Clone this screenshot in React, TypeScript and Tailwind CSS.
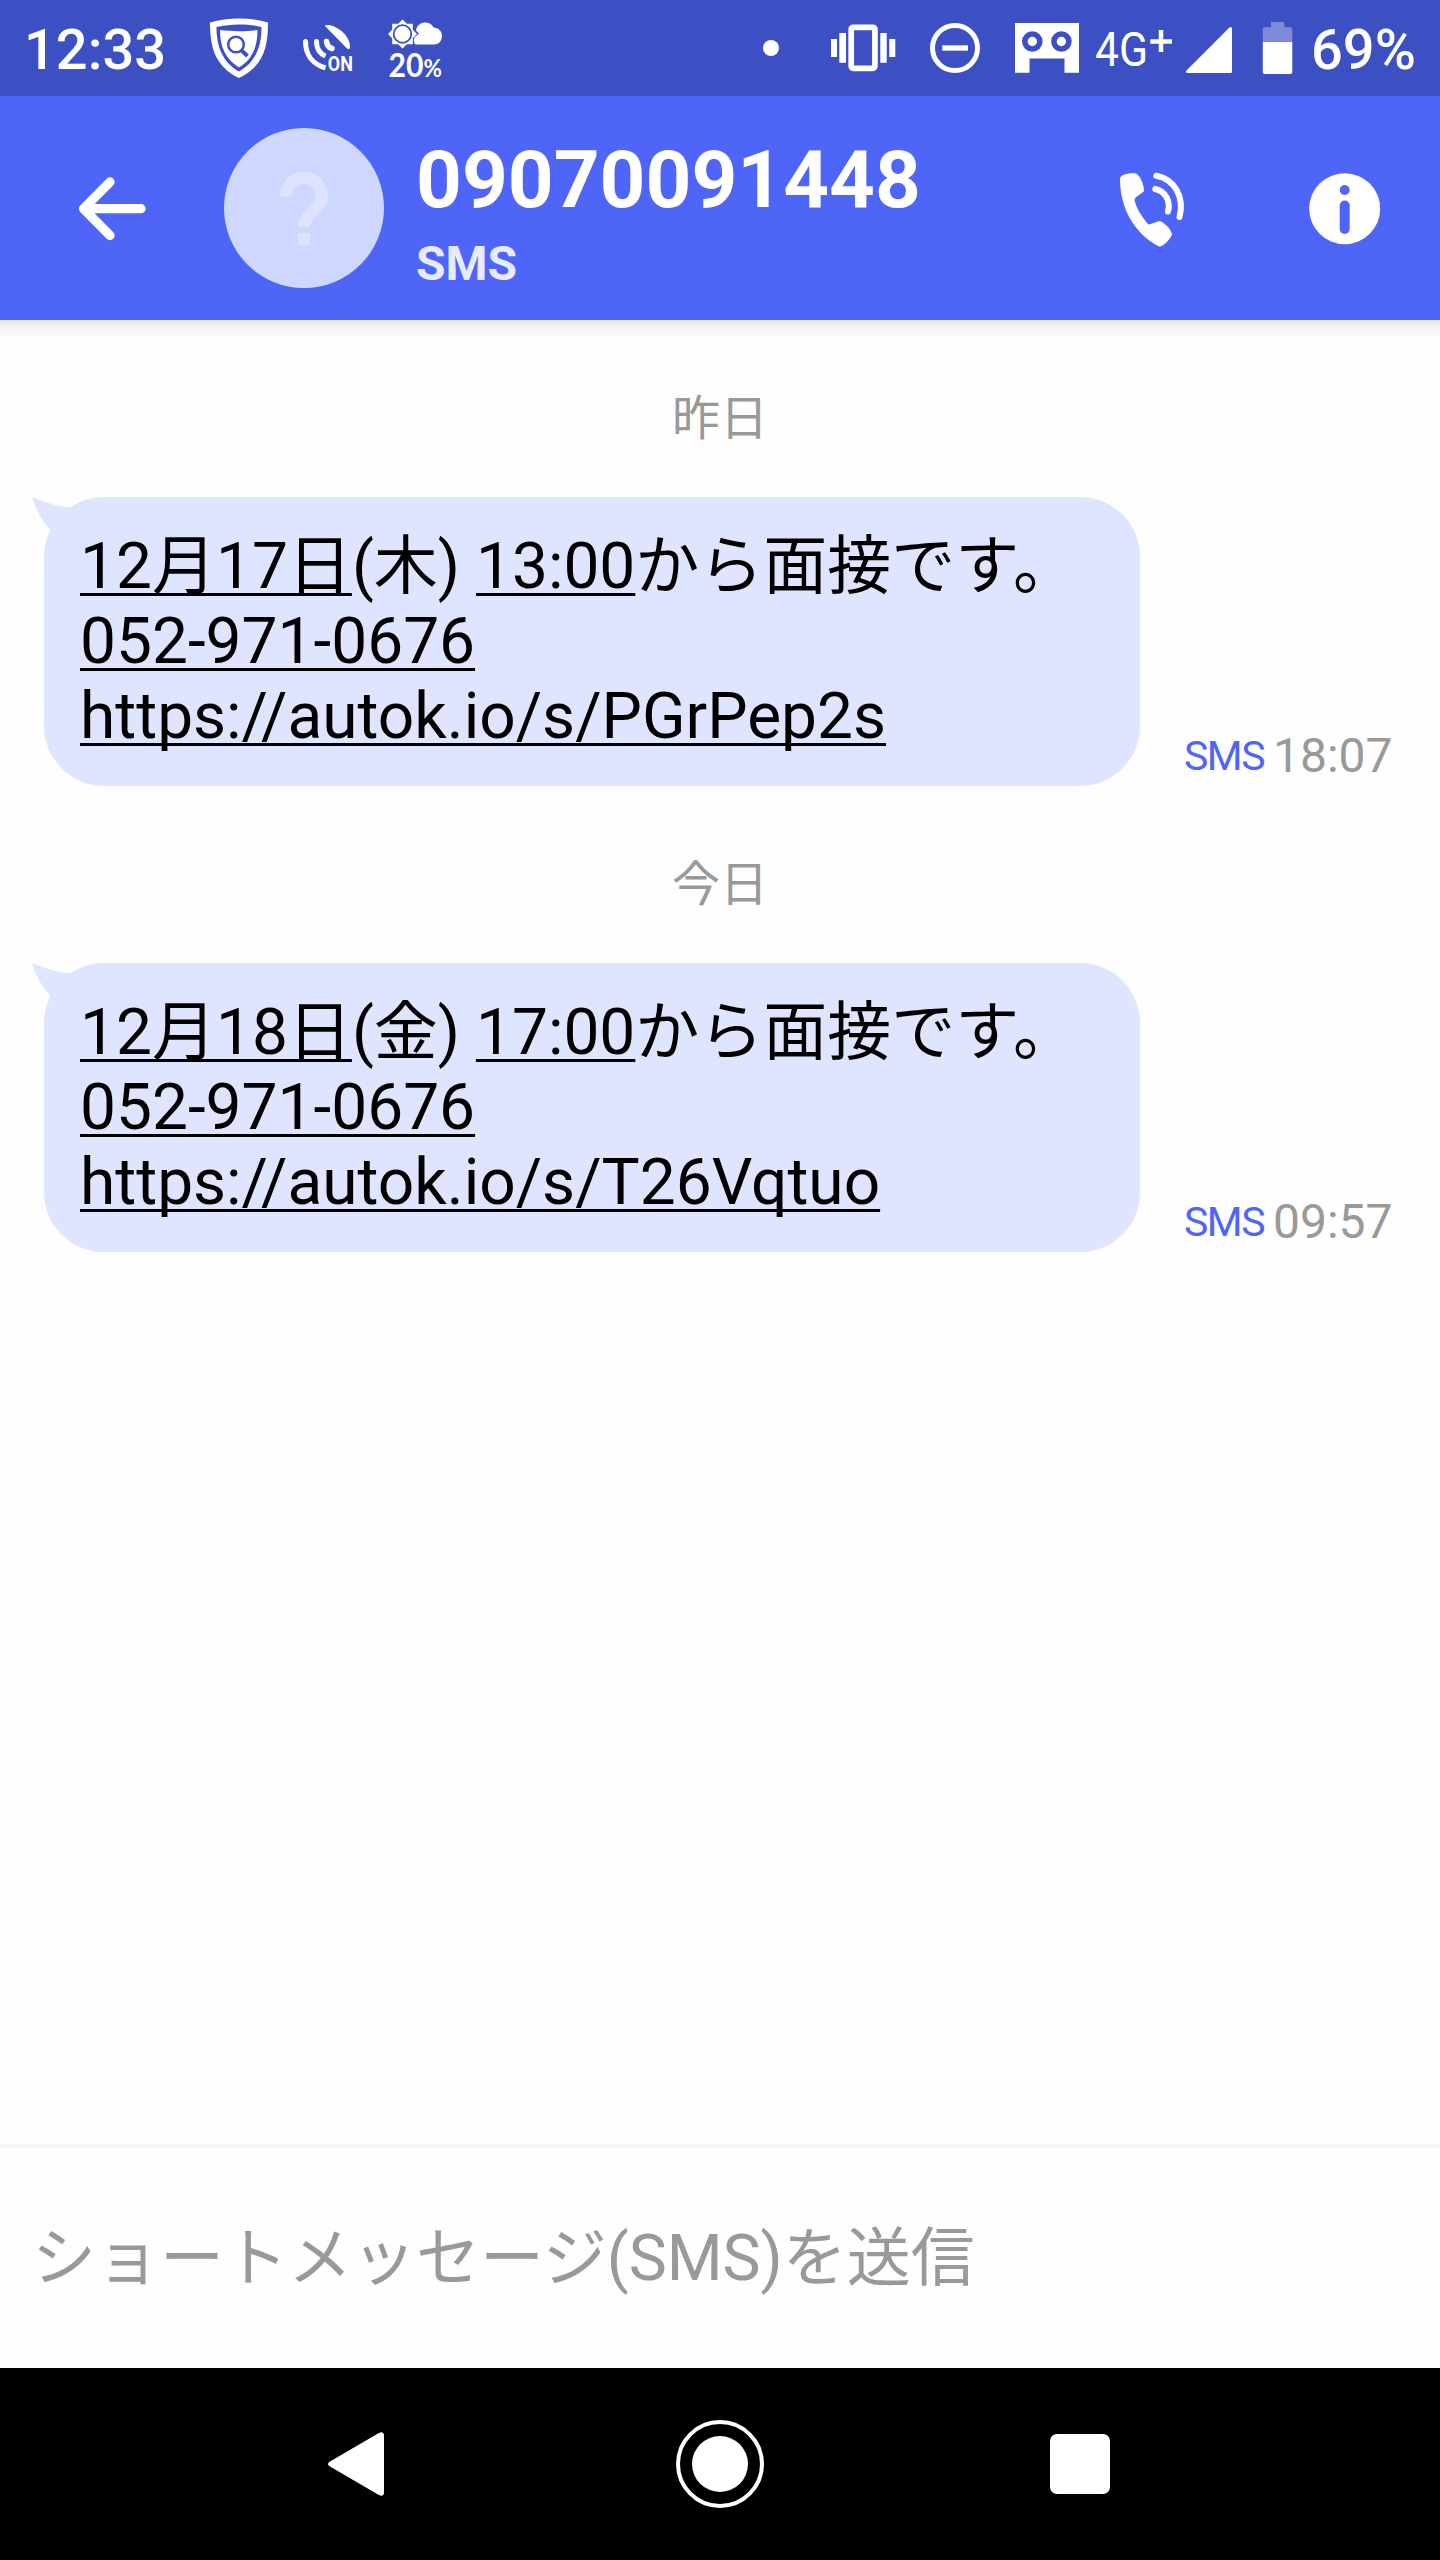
import type { ReactNode } from "react";

interface Message {
  day: string;
  date: string;
  weekday: string;
  hour: string;
  phone: string;
  url: string;
  sentAt: string;
}

const messages: Message[] = [
  {
    day: "昨日",
    date: "12月17日",
    weekday: "(木)",
    hour: "13:00",
    phone: "052-971-0676",
    url: "https://autok.io/s/PGrPep2s",
    sentAt: "18:07",
  },
  {
    day: "今日",
    date: "12月18日",
    weekday: "(金)",
    hour: "17:00",
    phone: "052-971-0676",
    url: "https://autok.io/s/T26Vqtuo",
    sentAt: "09:57",
  },
];

const StatusBar = () => (
  <div className="flex h-24 items-center bg-[#3c50c3] text-white">
    <span className="w-[210px] shrink-0 pl-6 pt-[5px] text-[56px] font-medium leading-[91px]">12:33</span>

    {/* Security shield */}
    <svg className="h-24 w-[58px] shrink-0" viewBox="210 0 58 96">
      <path d="M210 22.500C228 17 250 17 268 22.500C268 46 264 66 239 78C214 66 210 46 210 22.500Z" fill="#fff" />
      <path d="M216.500 27C231 23.500 247 23.500 261.500 27C261.500 46 256 62 239 71.500C222 62 216.500 46 216.500 27Z" fill="#3c50c3" />
      <path d="M220 30C232 31.500 246 31.500 257.500 30C257.500 46 253 59 239 67.500C225 59 220 46 220 30Z" fill="#fff" />
      <circle cx="236" cy="44.500" r="7.800" fill="#fff" stroke="#3c50c3" strokeWidth="2.500" />
      <path d="M241.500 50.500L247.500 56" stroke="#3c50c3" strokeWidth="4" />
    </svg>

    {/* GPS dish */}
    <svg className="ml-[34px] h-24 w-[64px] shrink-0 overflow-visible" viewBox="302 0 64 96">
      <path d="M325 26C325 25 327 24.700 329 25C340 27 350 37 350 47C350 49.500 348 49.500 346.500 48Z" fill="#fff" />
      <g fill="none" stroke="#fff" strokeWidth="5" strokeLinecap="round">
        <path d="M305.500 41.500C305.500 55 313 64.500 325.500 67.800" strokeLinecap="butt" />
        <path d="M305.500 41.500V42" />
        <path d="M316.500 41.500C316.500 49 319.500 53.500 325.500 56" strokeLinecap="butt" />
        <path d="M316.500 41.500V42" />
        <path d="M326.500 41.500C327 45 328.500 47.500 332 48.500" strokeWidth="5.500" />
      </g>
      <text x="327.800" y="71" fill="#fff" fontSize="20" fontWeight="700" textLength="25" lengthAdjust="spacingAndGlyphs">ON</text>
    </svg>

    {/* Weather */}
    <svg className="ml-[21px] h-24 w-[56px] shrink-0 overflow-visible" viewBox="387 0 56 96">
      <path d="M402.500 19.500L406.800 23.700H412.800V29.700L417 34L412.800 38.300V44.300H406.800L402.500 48.500L398.200 44.300H392.200V38.300L388 34L392.200 29.700V23.700H398.200Z" fill="#fff" />
      <circle cx="402.500" cy="34" r="8.800" fill="#fff" stroke="#3c50c3" strokeWidth="1.800" />
      <path d="M415.500 44.500C413.500 43 413.500 39 415 37L419 33.500L416 30.500C417.500 21 430 20 433.500 27.500C438 27.500 442 31 442 36C442 41 438.500 44.500 434 44.500Z" fill="#fff" />
      <g className="[font-family:Lato,sans-serif]" fill="#fff" fontWeight="700">
        <text x="388.500" y="77" fontSize="32" textLength="35" lengthAdjust="spacingAndGlyphs">20</text>
        <text x="423.500" y="77" fontSize="24" textLength="18.500" lengthAdjust="spacingAndGlyphs">%</text>
      </g>
    </svg>

    <span className="ml-[320px] size-4 shrink-0 rounded-full bg-white" />

    {/* Vibrate */}
    <svg className="ml-[52px] h-24 w-[65px] shrink-0" viewBox="831 0 65 96">
      <rect x="851.200" y="27.300" width="23.700" height="41" rx="2" fill="none" stroke="#fff" strokeWidth="5.700" />
      <path d="M831 39H837V57H831ZM839.300 33H846V62.700H839.300ZM880.300 33H886.700V62.700H880.300ZM889.300 39H895.300V57H889.300Z" fill="#fff" />
    </svg>

    {/* Do not disturb */}
    <svg className="ml-[34px] h-24 w-[50px] shrink-0" viewBox="930 0 50 96">
      <circle cx="955" cy="48" r="22.500" fill="none" stroke="#fff" strokeWidth="5" />
      <path d="M942.300 48H968" stroke="#fff" strokeWidth="5.300" />
    </svg>

    {/* Voicemail robot */}
    <svg className="ml-[35px] h-24 w-16 shrink-0" viewBox="1015 0 64 96">
      <path d="M1015 23H1079V72.700H1064.500V58.500H1029.500V72.700H1015Z" fill="#fff" />
      <circle cx="1032.300" cy="41.500" r="7.500" fill="#fff" stroke="#3c50c3" strokeWidth="5.600" />
      <circle cx="1061.400" cy="41.500" r="7.500" fill="#fff" stroke="#3c50c3" strokeWidth="5.600" />
    </svg>

    <svg className="ml-[15px] h-24 w-[80px] shrink-0" viewBox="1094 0 80 96">
      <text x="1095" y="65.500" fill="#fff" fontSize="49" textLength="53" lengthAdjust="spacingAndGlyphs">4G</text>
      <path d="M1150.300 41.500H1172M1161 30V52" stroke="#fff" strokeWidth="4.500" />
    </svg>

    {/* Signal */}
    <svg className="ml-[12px] h-24 w-[46px] shrink-0" viewBox="1186 0 46 96">
      <path d="M1187.500 71.500L1230.500 28.500V71.500Z" fill="#fff" stroke="#fff" strokeWidth="3" strokeLinejoin="round" />
    </svg>

    {/* Battery */}
    <svg className="ml-[30px] h-24 w-[31px] shrink-0" viewBox="1262 0 31 96">
      <path d="M1271 22H1284.300V27.300H1290.500Q1292.300 27.300 1292.300 29V42H1262.800V29Q1262.800 27.300 1264.500 27.300H1271Z" fill="#7c8ad7" />
      <path d="M1262.800 42H1292.300V72Q1292.300 74 1290.500 74H1264.500Q1262.800 74 1262.800 72Z" fill="#fff" />
    </svg>

    <span className="ml-[18px] pt-[5px] text-[56px] font-medium leading-[91px]">69%</span>
  </div>
);

const Header = () => (
  <header className="relative z-10 flex h-56 bg-[#4f65f7]">
    <svg className="h-56 w-[224px] shrink-0" viewBox="0 96 224 224">
      <path
        d="M110 182L83.500 208.700L110 235.500M84 208.700H141"
        fill="none"
        stroke="#fff"
        strokeWidth="9.300"
        strokeLinecap="round"
        strokeLinejoin="round"
      />
    </svg>
    <svg className="mt-8 size-40 shrink-0 rounded-full bg-[#ced8ff]" viewBox="224 128 160 160">
      <path
        d="M286 196.500C286 185 294 178 304 178C314 178 322 186 322 196C322 209 304 212 304 227"
        fill="none"
        stroke="#dee4ff"
        strokeWidth="12"
      />
      <path d="M298 233H310V245H298Z" fill="#dee4ff" />
    </svg>
    <div className="ml-8 mt-[37px] flex flex-col font-bold">
      <span className="text-[80px] leading-[94px] text-white">09070091448</span>
      <span className="mt-2 text-[48px] leading-[57px] text-[#e8ebff]">SMS</span>
    </div>
    <svg className="ml-auto h-56 w-[80px] shrink-0" viewBox="1112 96 80 224">
      <path
        d="M1120 179C1120 175 1128 172.800 1136 173.500C1140 175.500 1144 184 1144 191C1141 195 1135 196 1134.500 200C1136.500 209 1142 217 1148.500 224.500C1153 224 1157 220.500 1161 221.500C1166 224 1171 229.500 1172 234.500C1170 239.500 1163 247 1159 246.500C1135 234 1120 209 1120 179Z"
        fill="#fff"
      />
      <g fill="none" stroke="#fff" strokeWidth="6" strokeLinecap="round">
        <path d="M1155.300 189C1165 191 1171 201 1168 211.500" />
        <path d="M1156.300 175.800C1174 179 1185 197 1179.500 217" />
      </g>
    </svg>
    <svg className="ml-[112px] mr-[56px] h-56 w-[80px] shrink-0" viewBox="1304 96 80 224">
      <circle cx="1344.700" cy="208.700" r="35.500" fill="#fff" />
      <circle cx="1344.700" cy="190" r="5" fill="#4f65f7" />
      <path d="M1344.700 205.500V229" stroke="#4f65f7" strokeWidth="10" strokeLinecap="round" />
    </svg>
  </header>
);

const LinkText = ({ children }: { children: ReactNode }) => (
  <span className="underline decoration-[3px] underline-offset-[5px] [text-decoration-skip-ink:none]">{children}</span>
);

const MessageItem = ({ message }: { message: Message }) => (
  <section className="pt-[71px]">
    <p className="mb-[50px] text-center text-[48px] leading-[56px] text-[#999999]">{message.day}</p>
    <div className="flex items-end pl-11">
      <div className="relative h-[289px] w-[1096px] rounded-[60px] bg-[#e0e5ff] px-9 pt-8 text-[64px] leading-[75px] text-black">
        {/* Bubble tail */}
        <svg className="absolute -left-3 top-0 h-[60px] w-[60px]" viewBox="0 0 60 60">
          <path d="M0 0C12 5 24 9 37 10.300L46 30L18.500 32.500C9 24 3 10 0 0Z" fill="#e0e5ff" />
        </svg>
        <p className="whitespace-nowrap">
          <LinkText>{message.date}</LinkText>
          {message.weekday} <LinkText>{message.hour}</LinkText>から面接です。
        </p>
        <p><LinkText>{message.phone}</LinkText></p>
        <p><LinkText>{message.url}</LinkText></p>
      </div>
      <div className="mb-[2px] ml-[44px] flex items-end">
        <span className="mb-[4px] text-[41px] leading-[48px] tracking-[-1.5px] text-[#4f65f7]">SMS</span>
        <span className="ml-[9px] text-[48px] leading-[56px] text-[#999999]">{message.sentAt}</span>
      </div>
    </div>
  </section>
);

const NavBar = () => (
  <nav className="flex h-48 items-center justify-center gap-[272px] bg-black">
    <svg className="size-[88px]" viewBox="0 0 88 88">
      <path d="M14 41.500L62 13.500Q68 10 68 16V72Q68 78 62 74.500L14 46.500Q10 44 14 41.500Z" fill="#fff" />
    </svg>
    <svg className="size-[88px]" viewBox="0 0 88 88">
      <circle cx="44" cy="44" r="42" fill="none" stroke="#fff" strokeWidth="4" />
      <circle cx="44" cy="44" r="28" fill="#fff" />
    </svg>
    <svg className="size-[88px]" viewBox="0 0 88 88">
      <rect x="14" y="14" width="60" height="60" rx="7" fill="#fff" />
    </svg>
  </nav>
);

export default function App() {
  return (
    <div className="flex h-[2560px] w-[1440px] flex-col overflow-hidden bg-[#fefefe] [font-family:Roboto,'Noto_Sans_CJK_JP',sans-serif]" lang="ja">
      <StatusBar />
      <Header />
      <main className="flex-1 bg-[linear-gradient(to_bottom,#e4e4e4_0,#f3f3f3_7px,#fbfbfb_15px,#fefefe_24px)]">
        {messages.map((message) => (
          <MessageItem key={message.sentAt} message={message} />
        ))}
      </main>
      <footer className="flex h-[224px] items-center border-t-4 border-[#f5f5f5] px-8 pt-px">
        <span className="text-[64px] leading-[75px] text-[#999999]">ショートメッセージ(SMS)を送信</span>
      </footer>
      <NavBar />
    </div>
  );
}
